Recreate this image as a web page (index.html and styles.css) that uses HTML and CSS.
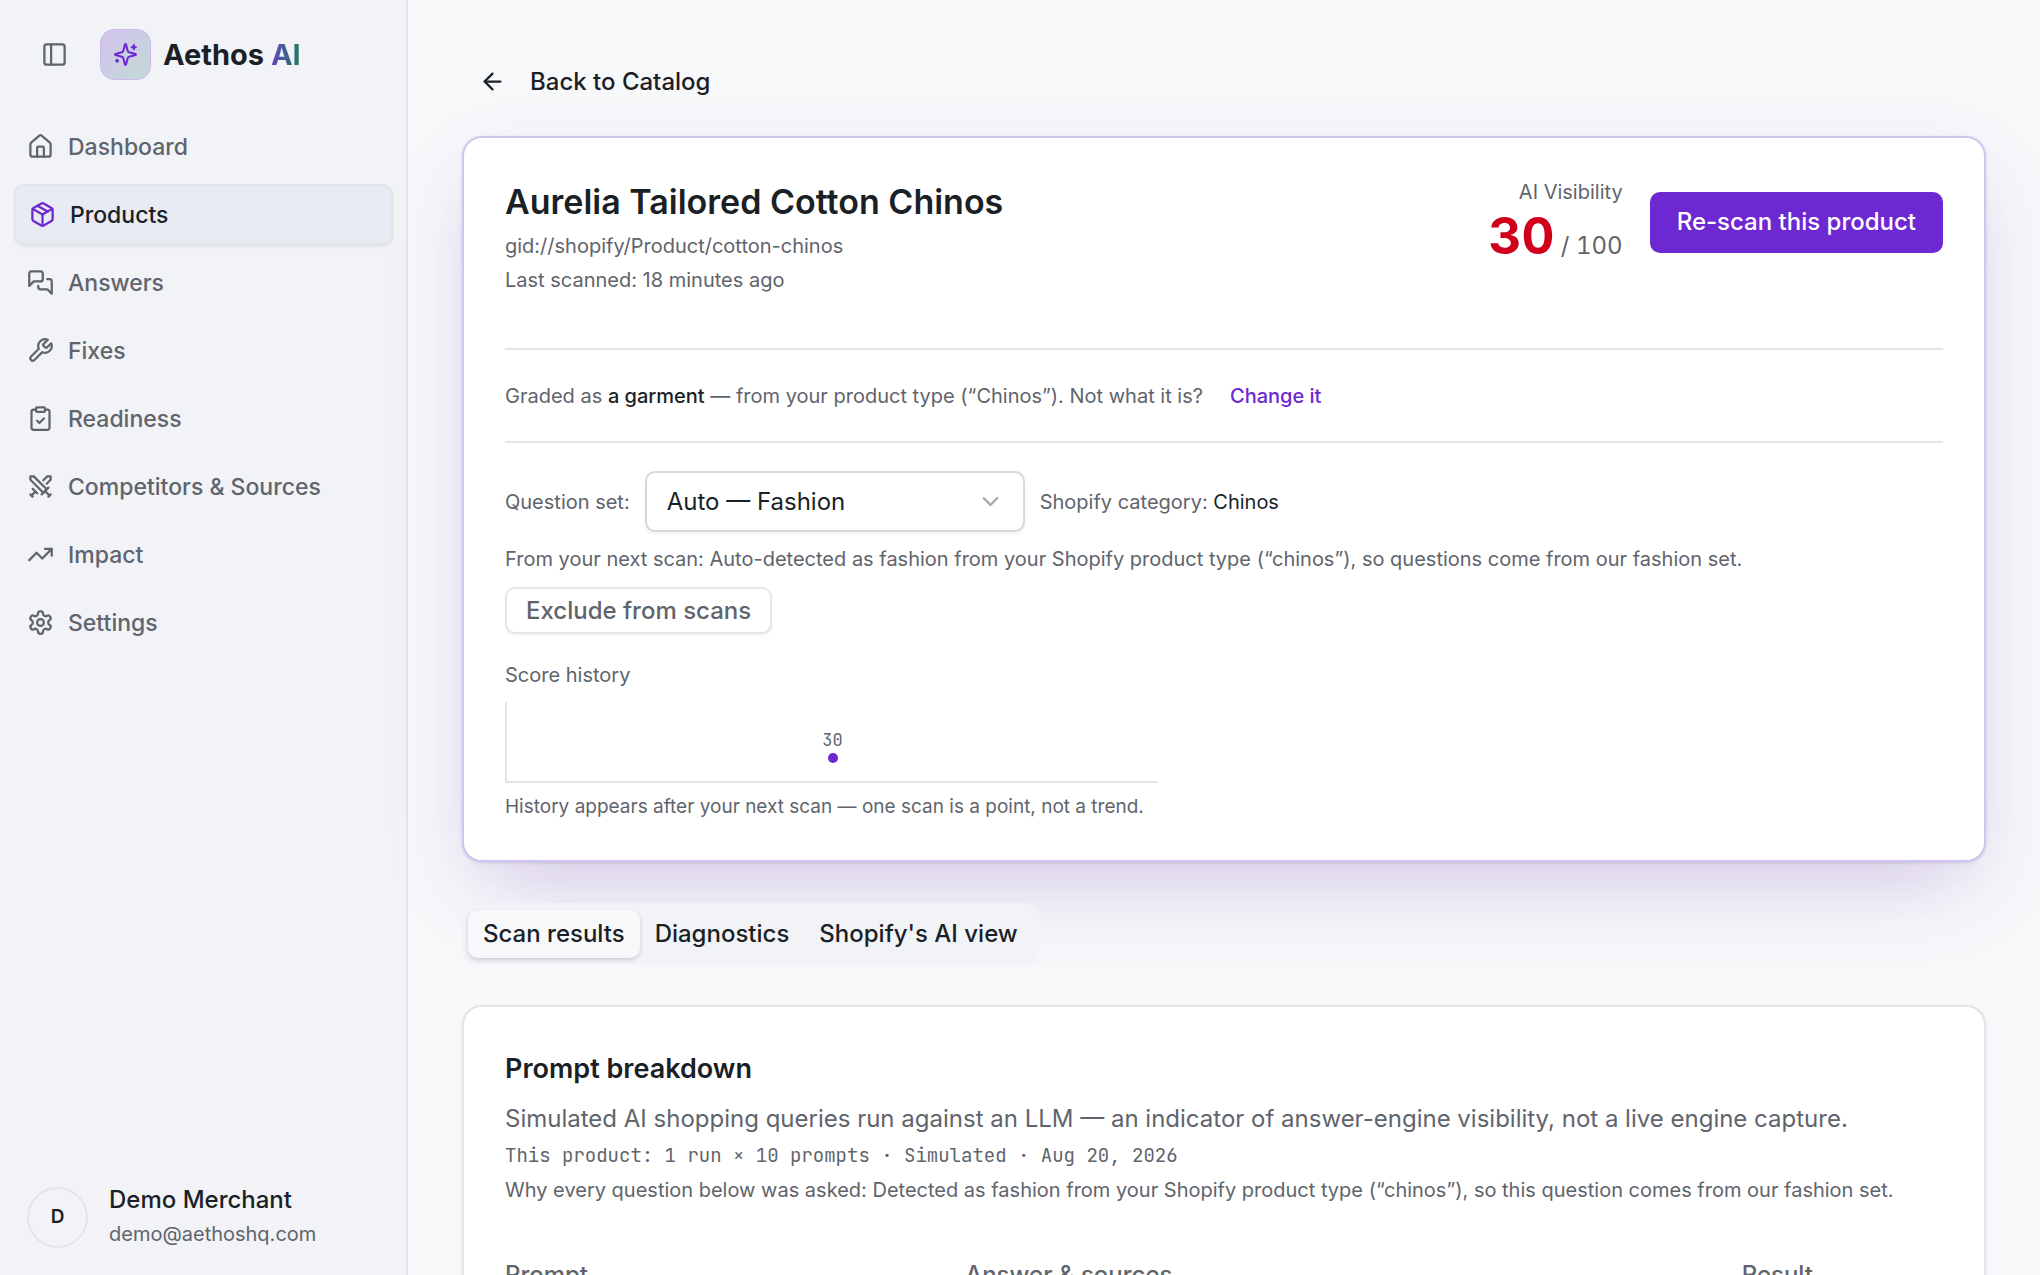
FILE: index.html
```html
<!DOCTYPE html>
<html lang="en">
<head>
  <meta charset="UTF-8">
  <meta name="viewport" content="width=device-width, initial-scale=1">
  <title>Aurelia Tailored Cotton Chinos – Aethos AI</title>
  <link rel="stylesheet" href="styles.css">
</head>
<body>

<div class="app">
  <aside class="sidebar">
    <div class="sidebar-head">
      <button class="toggle" type="button" aria-label="Toggle sidebar">
        <svg class="icon" viewBox="0 0 24 24"><rect width="18" height="18" x="3" y="3" rx="2"/><path d="M9 3v18"/></svg>
      </button>
      <a class="brand" href="#">
        <span class="brand-mark">
          <svg class="icon" viewBox="0 0 24 24"><path d="M9.937 15.5A2 2 0 0 0 8.5 14.063l-6.135-1.582a.5.5 0 0 1 0-.962L8.5 9.936A2 2 0 0 0 9.937 8.5l1.582-6.135a.5.5 0 0 1 .963 0L14.063 8.5A2 2 0 0 0 15.5 9.937l6.135 1.581a.5.5 0 0 1 0 .964L15.5 14.063a2 2 0 0 0-1.437 1.437l-1.582 6.135a.5.5 0 0 1-.963 0z"/><path d="M20 3v4"/><path d="M22 5h-4"/><path d="M4 17v2"/><path d="M5 18H3"/></svg>
        </span>
        <span class="brand-name">Aethos <span class="brand-ai">AI</span></span>
      </a>
    </div>

    <nav class="nav">
      <a href="#">
        <svg class="icon" viewBox="0 0 24 24"><path d="M15 21v-8a1 1 0 0 0-1-1h-4a1 1 0 0 0-1 1v8"/><path d="M3 10a2 2 0 0 1 .709-1.528l7-5.999a2 2 0 0 1 2.582 0l7 5.999A2 2 0 0 1 21 10v9a2 2 0 0 1-2 2H5a2 2 0 0 1-2-2z"/></svg>
        Dashboard
      </a>
      <a href="#" class="active" aria-current="page">
        <svg class="icon" viewBox="0 0 24 24"><path d="M11 21.73a2 2 0 0 0 2 0l7-4A2 2 0 0 0 21 16V8a2 2 0 0 0-1-1.73l-7-4a2 2 0 0 0-2 0l-7 4A2 2 0 0 0 3 8v8a2 2 0 0 0 1 1.73z"/><path d="M12 22V12"/><path d="m3.3 7 8.7 5 8.7-5"/><path d="m7.5 4.27 9 5.15"/></svg>
        Products
      </a>
      <a href="#">
        <svg class="icon" viewBox="0 0 24 24"><path d="M14 9a2 2 0 0 1-2 2H6l-4 4V4a2 2 0 0 1 2-2h8a2 2 0 0 1 2 2z"/><path d="M18 9h2a2 2 0 0 1 2 2v11l-4-4h-6a2 2 0 0 1-2-2v-1"/></svg>
        Answers
      </a>
      <a href="#">
        <svg class="icon" viewBox="0 0 24 24"><path d="M14.7 6.3a1 1 0 0 0 0 1.4l1.6 1.6a1 1 0 0 0 1.4 0l3.77-3.77a6 6 0 0 1-7.94 7.94l-6.91 6.91a2.12 2.12 0 0 1-3-3l6.91-6.91a6 6 0 0 1 7.94-7.94l-3.76 3.76z"/></svg>
        Fixes
      </a>
      <a href="#">
        <svg class="icon" viewBox="0 0 24 24"><rect width="8" height="4" x="8" y="2" rx="1" ry="1"/><path d="M16 4h2a2 2 0 0 1 2 2v14a2 2 0 0 1-2 2H6a2 2 0 0 1-2-2V6a2 2 0 0 1 2-2h2"/><path d="m9 14 2 2 4-4"/></svg>
        Readiness
      </a>
      <a href="#">
        <svg class="icon" viewBox="0 0 24 24"><path d="M14.5 17.5 3 6V3h3l11.5 11.5"/><path d="m13 19 6-6"/><path d="m16 16 4 4"/><path d="m19 21 2-2"/><path d="M14.5 6.5 18 3h3v3l-3.5 3.5"/><path d="m5 14 4 4"/><path d="m7 17-3 3"/><path d="m3 19 2 2"/></svg>
        Competitors &amp; Sources
      </a>
      <a href="#">
        <svg class="icon" viewBox="0 0 24 24"><path d="m22 7-8.500 8.500-5-5L2 17"/><path d="M16 7h6v6"/></svg>
        Impact
      </a>
      <a href="#">
        <svg class="icon" viewBox="0 0 24 24"><path d="M12.220 2h-.44a2 2 0 0 0-2 2v.18a2 2 0 0 1-1 1.730l-.43.25a2 2 0 0 1-2 0l-.15-.08a2 2 0 0 0-2.730.73l-.22.38a2 2 0 0 0 .73 2.730l.15.1a2 2 0 0 1 1 1.720v.51a2 2 0 0 1-1 1.740l-.15.09a2 2 0 0 0-.73 2.730l.22.38a2 2 0 0 0 2.730.73l.15-.08a2 2 0 0 1 2 0l.43.25a2 2 0 0 1 1 1.730V20a2 2 0 0 0 2 2h.44a2 2 0 0 0 2-2v-.18a2 2 0 0 1 1-1.730l.43-.25a2 2 0 0 1 2 0l.15.08a2 2 0 0 0 2.730-.73l.22-.39a2 2 0 0 0-.73-2.730l-.15-.08a2 2 0 0 1-1-1.740v-.5a2 2 0 0 1 1-1.740l.15-.09a2 2 0 0 0 .73-2.730l-.22-.38a2 2 0 0 0-2.730-.73l-.15.08a2 2 0 0 1-2 0l-.43-.25a2 2 0 0 1-1-1.730V4a2 2 0 0 0-2-2z"/><circle cx="12" cy="12" r="3"/></svg>
        Settings
      </a>
    </nav>

    <div class="user">
      <span class="avatar">D</span>
      <div>
        <div class="user-name">Demo Merchant</div>
        <div class="user-mail">demo@aethoshq.com</div>
      </div>
    </div>
  </aside>

  <main class="main">
    <a class="back" href="#">
      <svg class="icon" viewBox="0 0 24 24"><path d="m12 19-7-7 7-7"/><path d="M19 12H5"/></svg>
      Back to Catalog
    </a>

    <section class="card card-hero">
      <header class="product-head">
        <div>
          <h1>Aurelia Tailored Cotton Chinos</h1>
          <p class="small">gid://shopify/Product/cotton-chinos</p>
          <p class="small">Last scanned: 18 minutes ago</p>
        </div>
        <div class="product-side">
          <div class="score">
            <div class="score-label">AI Visibility</div>
            <div class="score-value"><strong>30</strong> / 100</div>
          </div>
          <button class="btn-primary" type="button">Re-scan this product</button>
        </div>
      </header>

      <div class="graded small">
        <span>Graded as <b>a garment</b> — from your product type (“Chinos”). Not what it is?</span>
        <a href="#">Change it</a>
      </div>

      <div class="question-set small">
        <label for="question-set">Question set:</label>
        <div class="select">
          <select id="question-set">
            <option>Auto — Fashion</option>
          </select>
          <svg class="icon" viewBox="0 0 24 24"><path d="m6 9 6 6 6-6"/></svg>
        </div>
        <span>Shopify category: <em>Chinos</em></span>
      </div>
      <p class="small next-scan">From your next scan: Auto-detected as fashion from your Shopify product type (“chinos”), so questions come from our fashion set.</p>
      <button class="btn-outline" type="button">Exclude from scans</button>

      <div class="history">
        <p class="small">Score history</p>
        <div class="chart">
          <div class="point"><span>30</span><i></i></div>
        </div>
        <p class="caption">History appears after your next scan — one scan is a point, not a trend.</p>
      </div>
    </section>

    <div class="tabs" role="tablist">
      <button type="button" role="tab" aria-selected="true">Scan results</button>
      <button type="button" role="tab" aria-selected="false">Diagnostics</button>
      <button type="button" role="tab" aria-selected="false">Shopify's AI view</button>
    </div>

    <section class="card">
      <h2>Prompt breakdown</h2>
      <p class="lead">Simulated AI shopping queries run against an LLM — an indicator of answer-engine visibility, not a live engine capture.</p>
      <p class="mono">This product: 1 run × 10 prompts · Simulated · Aug 20, 2026</p>
      <p class="small">Why every question below was asked: Detected as fashion from your Shopify product type (“chinos”), so this question comes from our fashion set.</p>

      <table class="prompts">
        <thead>
          <tr>
            <th class="col-prompt" scope="col">Prompt</th>
            <th class="col-answer" scope="col">Answer &amp; sources</th>
            <th scope="col">Result</th>
          </tr>
        </thead>
      </table>
    </section>
  </main>
</div>

</body>
</html>
```
FILE: styles.css
```css
:root {
  --bg: #f7f8fa;
  --panel: #f1f3f7;
  --text: #1b1f26;
  --muted: #60646c;
  --line: #e4e5e9;
  --purple: #6d28d2;
  --red: #d0021b;
}

* {
  box-sizing: border-box;
}

body {
  margin: 0;
  font-family: Inter, "Liberation Sans", sans-serif;
  font-size: 24px;
  line-height: 34px;
  color: var(--text);
  background: var(--bg);
}

h1, h2, p {
  margin: 0;
}

a {
  color: inherit;
  text-decoration: none;
}

button, select {
  font: inherit;
  color: inherit;
  cursor: pointer;
}

.icon {
  flex: none;
  width: 27px;
  height: 27px;
  fill: none;
  stroke: currentColor;
  stroke-width: 2;
  stroke-linecap: round;
  stroke-linejoin: round;
}

.app {
  display: flex;
  height: 100vh;
  overflow: hidden;
}

/* sidebar */
.sidebar {
  flex: none;
  display: flex;
  flex-direction: column;
  width: 408px;
  padding: 29px 13px 24px 14px;
  background: var(--panel);
  border-right: 2px solid var(--line);
}

.sidebar-head {
  display: flex;
  align-items: center;
  gap: 20px;
  padding-left: 15px;
}

.toggle {
  display: flex;
  padding: 12px;
  border: 0;
  background: none;
  color: var(--muted);
}

.brand {
  display: flex;
  align-items: center;
  gap: 12px;
}

.brand-mark {
  display: flex;
  align-items: center;
  justify-content: center;
  width: 51px;
  height: 51px;
  border: 1px solid #cdb8ee;
  border-radius: 14px;
  background: linear-gradient(135deg, #d3c2f0, #c3dbd5);
  color: var(--purple);
}

.brand-mark .icon {
  width: 25px;
  height: 25px;
}

.brand-name {
  font-size: 29px;
  font-weight: 700;
}

.brand-ai {
  background: linear-gradient(90deg, #6644bd, #1d7a5c);
  -webkit-background-clip: text;
  background-clip: text;
  color: transparent;
}

.nav {
  display: flex;
  flex-direction: column;
  gap: 7px;
  margin-top: 36px;
}

.nav a {
  display: flex;
  align-items: center;
  gap: 14px;
  height: 61px;
  padding: 0 13px;
  border-radius: 10px;
  font-size: 23px;
  font-weight: 500;
  color: var(--muted);
}

.nav a.active {
  border: 2px solid #e2e4e9;
  background: #e8ebf3;
  color: var(--text);
  box-shadow: 0 2px 3px rgba(0, 0, 0, 0.06);
}

.nav a.active .icon {
  color: var(--purple);
}

.user {
  display: flex;
  align-items: center;
  gap: 21px;
  margin-top: auto;
  padding-left: 13px;
}

.avatar {
  display: flex;
  align-items: center;
  justify-content: center;
  width: 61px;
  height: 61px;
  border: 2px solid var(--line);
  border-radius: 50%;
  font-size: 19px;
  font-weight: 600;
}

.user-name {
  font-weight: 500;
}

.user-mail {
  font-size: 20px;
  color: var(--muted);
}

/* main column */
.main {
  flex: 1;
  display: flex;
  flex-direction: column;
  align-items: flex-start;
  min-width: 0;
  padding: 51px 54px;
}

.back {
  flex: none;
  display: flex;
  align-items: center;
  gap: 24px;
  height: 61px;
  margin-bottom: 24px;
  padding: 0 17px;
  font-weight: 500;
}

.card {
  flex: none;
  width: 100%;
  padding: 40px 41px;
  border: 2px solid #e2e4e8;
  border-radius: 20px;
  background: #fff;
  box-shadow: 0 2px 4px rgba(20, 25, 40, 0.08);
}

.card-hero {
  border-color: #d3c3f0;
  box-shadow: 0 1px 3px rgba(20, 25, 40, 0.14), 0 32px 80px -20px rgba(90, 40, 170, 0.26);
}

.small {
  font-size: 20px;
  color: var(--muted);
}

.product-head {
  display: flex;
  justify-content: space-between;
  align-items: flex-start;
  padding-bottom: 51px;
  border-bottom: 2px solid var(--line);
}

h1 {
  margin-bottom: 3px;
  font-size: 34px;
  font-weight: 600;
  line-height: 48px;
}

.product-side {
  display: flex;
  align-items: center;
  gap: 27px;
}

.score {
  text-align: right;
  color: var(--muted);
}

.score-label {
  font-size: 20px;
  line-height: 28px;
}

.score-value {
  line-height: 40px;
  font-variant-numeric: tabular-nums;
}

.score-value strong {
  font-size: 51px;
  font-weight: 700;
  line-height: 59px;
  color: var(--red);
}

.btn-primary {
  height: 61px;
  padding: 0 27px;
  border: 0;
  border-radius: 10px;
  background: var(--purple);
  color: #fff;
  font-weight: 500;
}

.graded {
  display: flex;
  gap: 27px;
  padding: 29px 0 28px;
  border-bottom: 2px solid var(--line);
}

.graded b {
  font-weight: 500;
  color: var(--text);
}

.graded a {
  font-weight: 500;
  color: var(--purple);
}

.question-set {
  display: flex;
  align-items: center;
  gap: 15px;
  margin-top: 28px;
}

.question-set em {
  font-style: normal;
  color: var(--text);
}

.select {
  position: relative;
  width: 380px;
}

.select select {
  display: block;
  width: 100%;
  height: 61px;
  padding: 0 56px 0 20px;
  border: 2px solid #d6d8df;
  border-radius: 10px;
  background: #fff;
  box-shadow: 0 2px 3px rgba(0, 0, 0, 0.05);
  font-size: 24px;
  color: var(--text);
  appearance: none;
}

.select .icon {
  position: absolute;
  top: 17px;
  right: 21px;
  color: #a9abb0;
  pointer-events: none;
}

.next-scan {
  margin: 10px 0 11px;
}

.btn-outline {
  height: 47px;
  padding: 0 19px;
  border: 2px solid var(--line);
  border-radius: 10px;
  background: #fff;
  box-shadow: 0 2px 3px rgba(0, 0, 0, 0.05);
  font-weight: 500;
  color: var(--muted);
}

.history {
  max-width: 653px;
  margin-top: 24px;
}

.chart {
  display: flex;
  justify-content: center;
  align-items: flex-end;
  height: 81px;
  margin: 10px 0 11px;
  padding-bottom: 18px;
  border-left: 2px solid var(--line);
  border-bottom: 2px solid var(--line);
}

.point {
  display: flex;
  flex-direction: column;
  align-items: center;
  font-family: "JetBrains Mono", "Liberation Mono", monospace;
  font-size: 17px;
  line-height: 26px;
  color: var(--muted);
}

.point i {
  width: 10px;
  height: 10px;
  border-radius: 50%;
  background: var(--purple);
}

.caption {
  font-size: 19px;
  line-height: 26px;
  color: var(--muted);
}

/* tabs */
.tabs {
  flex: none;
  display: flex;
  margin: 41px 0 40px;
  padding: 7px 6px;
  border-radius: 14px;
  background: var(--panel);
}

.tabs button {
  height: 48px;
  padding: 0 15px;
  border: 0;
  border-radius: 10px;
  background: none;
  font-weight: 500;
}

.tabs button[aria-selected="true"] {
  background: var(--bg);
  box-shadow: 0 2px 4px rgba(0, 0, 0, 0.16);
}

/* prompt breakdown */
h2 {
  margin-bottom: 8px;
  font-size: 27px;
  font-weight: 600;
  line-height: 44px;
}

.lead {
  line-height: 39px;
  color: var(--muted);
}

.mono {
  font-family: "JetBrains Mono", "Liberation Mono", monospace;
  font-size: 19px;
  line-height: 35px;
  color: var(--muted);
}

.prompts {
  width: 100%;
  margin-top: 44px;
  border-collapse: collapse;
  table-layout: fixed;
}

.prompts th {
  padding: 0;
  height: 48px;
  font-weight: 500;
  text-align: left;
  color: var(--muted);
}

.col-prompt {
  width: 32%;
}

.col-answer {
  width: 54%;
}
```
